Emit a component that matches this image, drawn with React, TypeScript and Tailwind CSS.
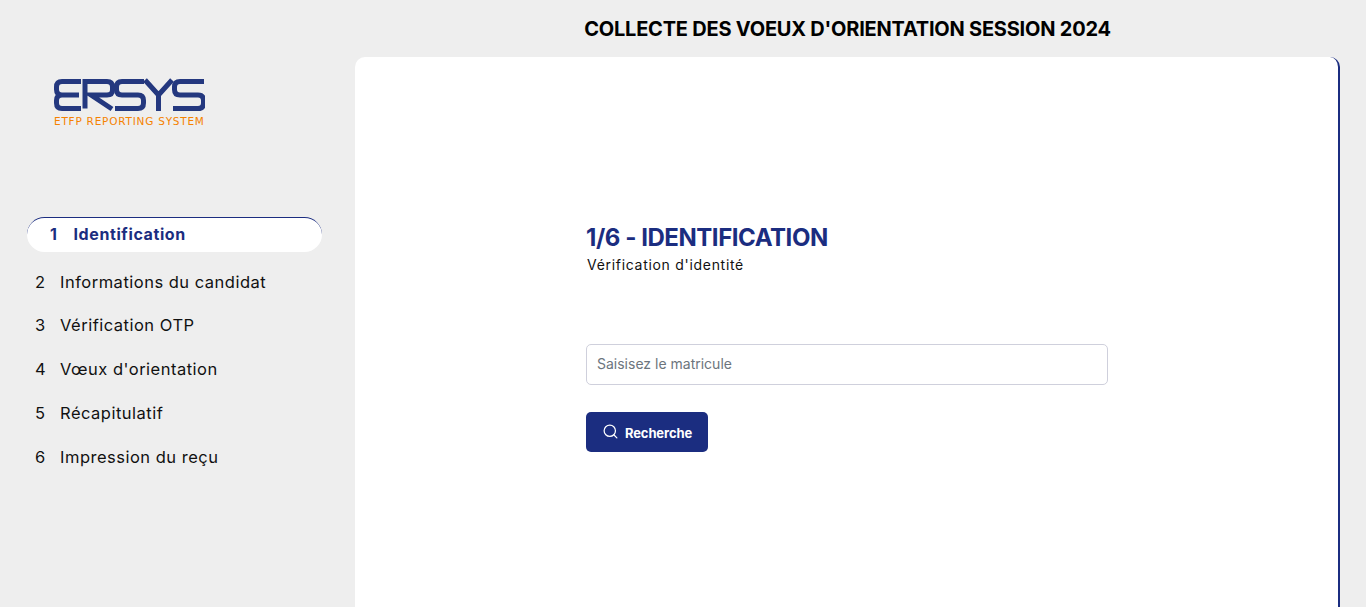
import { Search } from "lucide-react";

const steps = ["Informations du candidat", "Vérification OTP", "Vœux d'orientation", "Récapitulatif", "Impression du reçu"];

function Logo() {
  return (
    <div className="relative h-[48px] w-[152px]">
      <svg className="block" width="152" height="34" viewBox="0 0 152 34" fill="none" stroke="#24387f" strokeWidth="5" aria-label="ERSYS">
        <path d="M28 3.5H9Q3.5 3.5 3.5 9V11.5Q3.5 17 9 17H26M9 17Q3.5 17 3.5 22.5V25Q3.5 30.5 9 30.5H28" />
        <path d="M32 30.5V3.5H54Q59.5 3.5 59.5 9V12Q59.5 17 54 17H38L59 31" />
        <path d="M91 3.5H69Q63.5 3.5 63.5 9V11.5Q63.5 17 69 17H85Q90.5 17 90.5 22.5V25Q90.5 30.5 85 30.5H62" />
        <path d="M92 2L105.5 17L119 2M105.5 17V33" />
        <path d="M151 3.5H127Q121.5 3.5 121.5 9V11.5Q121.5 17 127 17H145Q150.5 17 150.5 22.5V25Q150.5 30.5 145 30.5H120" />
      </svg>
      <p className="mt-[3px] whitespace-nowrap pl-[1px] text-[10.5px] leading-[12px] tracking-[0.77px] text-[#f58200] [font-family:'DejaVu_Sans',sans-serif]">
        ETFP REPORTING SYSTEM
      </p>
    </div>
  );
}

export default function App() {
  return (
    <div className="flex h-[607px] overflow-hidden bg-[#eeeeee] text-black [font-family:Inter,sans-serif]">
      <aside className="w-[355px] shrink-0 pt-[78px]">
        <div className="pl-[53px]">
          <Logo />
        </div>
        <nav className="mt-[91px] pl-[27px] pr-[33px]">
          <div className="flex h-[35px] items-center rounded-[18px] border-t border-[#1b2d80] bg-white pb-[2px] pl-[23px] text-[16px] font-bold tracking-[0.6px] text-[#1b2d80]">
            <span className="w-[23.5px]">1</span>
            <span>Identification</span>
          </div>
          <ul className="mt-[8px] flex flex-col text-[16.5px] tracking-[0.5px] text-[#111111]">
            {steps.map((label, index) => (
              <li key={label} className="flex h-[43.75px] items-center pl-[8px]">
                <span className="w-[25px]">{index + 2}</span>
                <span>{label}</span>
              </li>
            ))}
          </ul>
        </nav>
      </aside>

      <div className="flex w-[985px] shrink-0 flex-col">
        <h1 className="flex h-[57px] items-center justify-center text-[20px] font-bold tracking-[-0.22px] text-black">
          COLLECTE DES VOEUX D'ORIENTATION SESSION 2024
        </h1>
        <main className="flex-1 rounded-t-[10px] border-r-2 border-[#1b2d80] bg-white pl-[231px] pt-[166px]">
          <h2 className="text-[24px] font-bold leading-[30px] tracking-[-0.45px] text-[#1b2d80]">1/6 - IDENTIFICATION</h2>
          <p className="pl-[1px] text-[14px] leading-[24px] tracking-[0.7px] text-[#111111]">Vérification d'identité</p>
          <input
            className="mt-[67px] block h-[41px] w-[522px] rounded-[5px] border border-[#cfd0dc] bg-white px-[10px] pb-[2px] text-[14px] outline-none placeholder:text-[#6c757d]"
            placeholder="Saisisez le matricule"
          />
          <button className="mt-[27px] flex h-[40px] w-[122px] items-center justify-center gap-[6px] rounded-[5px] bg-[#1b2d80] text-[13px] font-bold tracking-[-0.1px] text-white">
            <Search size={17} strokeWidth={1.75} className="mb-[2px]" />
            <span className="pt-[3px]">Recherche</span>
          </button>
        </main>
      </div>
    </div>
  );
}
